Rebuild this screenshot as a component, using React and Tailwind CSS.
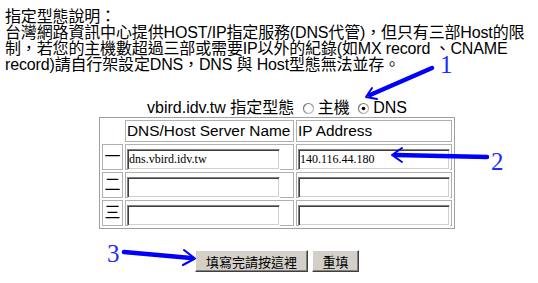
import { useState } from "react";

const ROWS = [
  { label: "一", name: "dns.vbird.idv.tw", ip: "140.116.44.180" },
  { label: "二", name: "", ip: "" },
  { label: "三", name: "", ip: "" },
];

function Radio({ checked }) {
  return (
    <svg width="13" height="13" viewBox="0 0 13 13" className="mx-[3px] shrink-0">
      <defs>
        <linearGradient id={checked ? "rg1" : "rg0"} x1="0" y1="0" x2="1" y2="1">
          <stop offset="0" stopColor="#606060" />
          <stop offset="1" stopColor="#d4d0c8" />
        </linearGradient>
      </defs>
      <circle cx="6.5" cy="6.5" r="5" fill="#fff" stroke={`url(#${checked ? "rg1" : "rg0"})`} strokeWidth="1.2" />
      {checked && <circle cx="6.5" cy="6.5" r="1.8" fill="#000" />}
    </svg>
  );
}

function TextBox({ value, width }) {
  return (
    <input
      type="text"
      defaultValue={value}
      className={`${width} h-[21px] px-[1px] text-[12px] font-['Liberation_Serif',serif] text-black bg-white outline-none border border-t-[#808080] border-l-[#808080] border-b-white border-r-white shadow-[inset_1px_1px_0_#404040,inset_-1px_-1px_0_#d4d0c8]`}
    />
  );
}

function Button({ children, width }) {
  return (
    <button className={`${width} h-[22px] text-[13px] leading-none bg-[#d4d0c8] border border-t-white border-l-white border-b-[#404040] border-r-[#404040] shadow-[inset_-1px_-1px_0_#808080]`}>
      {children}
    </button>
  );
}

export default function App() {
  const [mode] = useState("dns");

  return (
    <div className="relative w-[538px] h-[283px] overflow-hidden bg-white text-black text-[16px] font-['Liberation_Sans','Noto_Sans_CJK_TC',sans-serif]">
      <div className="pl-[5px] pt-[9px] leading-[16px] tracking-[-0.15px] whitespace-nowrap">
        <p>指定型態說明：</p>
        <p>台灣網路資訊中心提供HOST/IP指定服務(DNS代管)，但只有三部Host的限</p>
        <p>制，若您的主機數超過三部或需要IP以外的紀錄(如MX record 、CNAME</p>
        <p>record)請自行架設定DNS，DNS 與 Host型態無法並存。</p>
      </div>

      <div className="ml-[99px] mt-[26px] w-[356px]">
        <div className="h-[18px] flex items-center justify-center whitespace-nowrap">
          <span>vbird.idv.tw 指定型態&nbsp;</span>
          <Radio checked={mode === "host"} />
          <span>主機&nbsp;</span>
          <Radio checked={mode === "dns"} />
          <span>DNS</span>
        </div>

        <div className="grid grid-cols-[21px_169px_156px] gap-[2px] p-[2px] border border-[#a0a0a0]">
          <div className="h-[22px]" />
          <div className="h-[22px] border border-[#b0b0b0] pl-[1px] flex items-center whitespace-nowrap text-[15.4px]">
            DNS/Host Server Name
          </div>
          <div className="h-[22px] border border-[#b0b0b0] pl-[1px] flex items-center whitespace-nowrap text-[15.4px]">
            IP Address
          </div>

          {ROWS.map((row) => (
            <div key={row.label} className="contents">
              <div className="h-[26px] border border-[#b0b0b0] flex items-center justify-center">
                {row.label}
              </div>
              <div className="h-[26px] border border-[#b0b0b0] p-[1px]">
                <TextBox value={row.name} width="w-[153px]" />
              </div>
              <div className="h-[26px] border border-[#b0b0b0] p-[1px]">
                <TextBox value={row.ip} width="w-[152px]" />
              </div>
            </div>
          ))}
        </div>
      </div>

      <div className="ml-[195px] mt-[21px] flex gap-[4px] font-['Noto_Sans_CJK_TC',sans-serif]">
        <Button width="w-[113px]">填寫完請按這裡</Button>
        <Button width="w-[47px]">重填</Button>
      </div>

      <svg className="absolute inset-0 pointer-events-none" width="538" height="283" viewBox="0 0 538 283">
        <g stroke="#0000ff" fill="none" strokeLinecap="round" strokeLinejoin="round">
          <path d="M432 68 L370 95" strokeWidth="4.5" />
          <path d="M372 88 L366 97 L377 99" strokeWidth="2" />
          <path d="M487 157 L396 155" strokeWidth="4.5" />
          <path d="M402 148 L392 155 L402 162" strokeWidth="2" />
          <path d="M124 252 L191 258" strokeWidth="4.5" />
          <path d="M184 250 L195 258.5 L183 265" strokeWidth="2" />
        </g>
        <g fill="#1c2cff" fontFamily="'Liberation Serif', serif" fontSize="25">
          <text x="440" y="73">1</text>
          <text x="491" y="170">2</text>
          <text x="107" y="262">3</text>
        </g>
      </svg>
    </div>
  );
}
